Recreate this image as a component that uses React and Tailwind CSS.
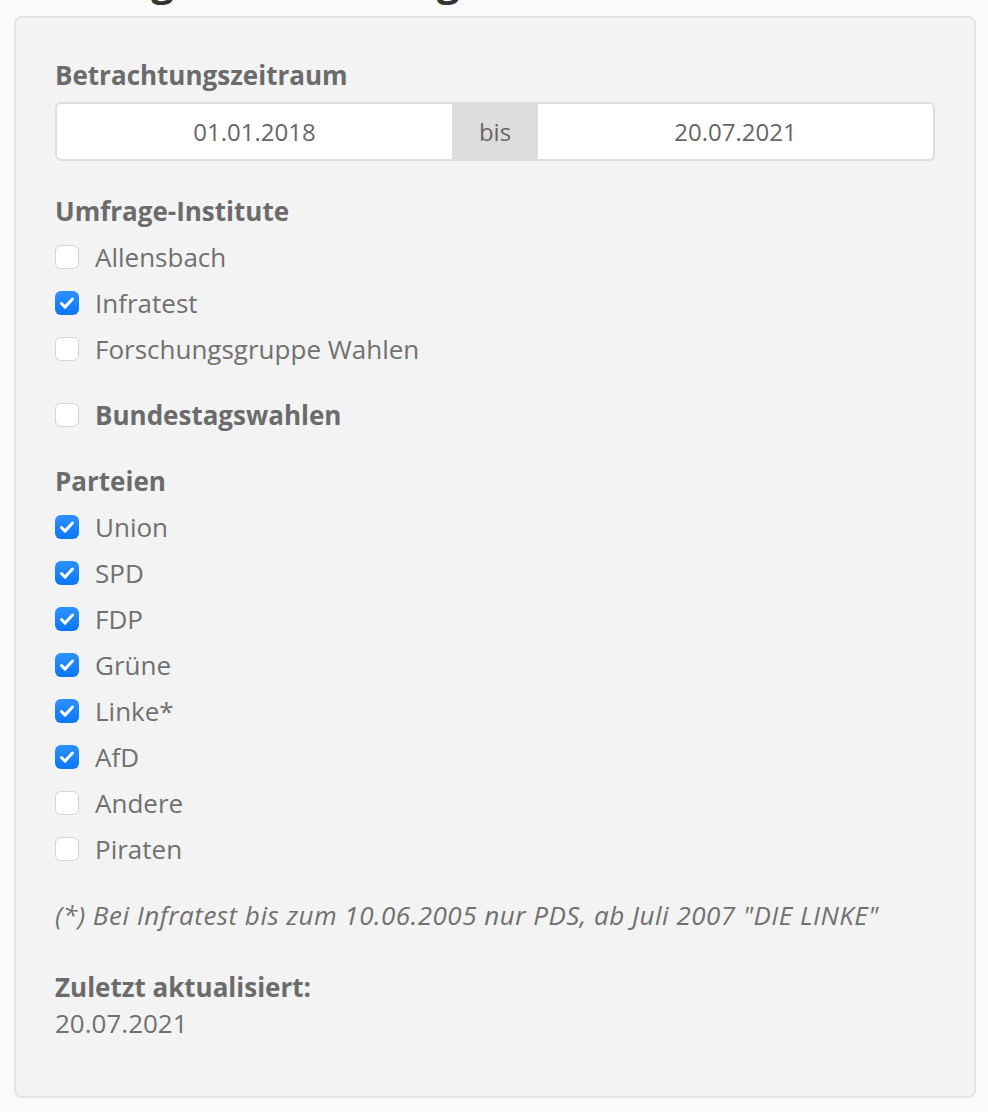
import React, { useState } from "react";

const institutes = [
  { id: "allensbach", label: "Allensbach", checked: false },
  { id: "infratest", label: "Infratest", checked: true },
  { id: "fgw", label: "Forschungsgruppe Wahlen", checked: false },
];

const parties = [
  { id: "union", label: "Union", checked: true },
  { id: "spd", label: "SPD", checked: true },
  { id: "fdp", label: "FDP", checked: true },
  { id: "gruene", label: "Grüne", checked: true },
  { id: "linke", label: "Linke*", checked: true },
  { id: "afd", label: "AfD", checked: true },
  { id: "andere", label: "Andere", checked: false },
  { id: "piraten", label: "Piraten", checked: false },
];

const Box = ({ checked }) =>
  checked ? (
    <span className="flex h-[24px] w-[24px] shrink-0 items-center justify-center rounded-[6px] bg-gradient-to-b from-[#2b93ff] to-[#0a76f5]">
      <svg width="18" height="18" viewBox="0 0 18 18" fill="none">
        <path d="M3.5 9.5l3.6 3.6L14.5 5" stroke="white" strokeWidth="3" strokeLinecap="round" strokeLinejoin="round" />
      </svg>
    </span>
  ) : (
    <span className="h-[24px] w-[24px] shrink-0 rounded-[6px] border border-[#d3d3d3] bg-white" />
  );

const CheckRow = ({ item, bold, onToggle }) => (
  <label className="flex h-[46px] cursor-pointer items-center gap-[16px]" onClick={() => onToggle(item.id)}>
    <Box checked={item.checked} />
    <span className={bold ? "font-bold text-[#6b6b6b]" : "text-[#707070]"}>{item.label}</span>
  </label>
);

const App = () => {
  const [inst, setInst] = useState(institutes);
  const [party, setParty] = useState(parties);
  const [btw, setBtw] = useState(false);

  const toggle = (list, setList) => (id) =>
    setList(list.map((x) => (x.id === id ? { ...x, checked: !x.checked } : x)));

  return (
    <div className="min-h-[1112px] bg-[#fafafa] pl-[14px] pr-[12px] font-['Open_Sans',sans-serif] text-[26px] leading-[36px]">
      {/* page heading, scrolled mostly out of view */}
      <div className="flex h-[16px] flex-col justify-end overflow-hidden">
        <h1 className="mb-[11px] shrink-0 pl-[10px] text-[40px] font-bold leading-[48px] text-[#333]">Umfragen im Zeitvergleich</h1>
      </div>

      <div className="rounded-[8px] border-2 border-[#e4e4e4] bg-[#f3f3f3] px-[39px] pb-[55px] pt-[39px]">
        <h3 className="font-bold text-[#6b6b6b]">Betrachtungszeitraum</h3>
        <div className="mt-[9px] flex h-[59px] overflow-hidden rounded-[6px] border-2 border-[#dedede] bg-white text-[24px] text-[#666]">
          <div className="flex flex-1 items-center justify-center">01.01.2018</div>
          <div className="flex w-[86px] items-center justify-center bg-[#dddddd]">bis</div>
          <div className="flex flex-1 items-center justify-center">20.07.2021</div>
        </div>

        <h3 className="mt-[32px] font-bold text-[#6b6b6b]">Umfrage-Institute</h3>
        <div className="mt-[5px]">
          {inst.map((i) => (
            <CheckRow key={i.id} item={i} onToggle={toggle(inst, setInst)} />
          ))}
        </div>

        <div className="mt-[20px]">
          <CheckRow item={{ id: "btw", label: "Bundestagswahlen", checked: btw }} bold onToggle={() => setBtw(!btw)} />
        </div>

        <h3 className="mt-[25px] font-bold text-[#6b6b6b]">Parteien</h3>
        <div className="mt-[5px]">
          {party.map((p) => (
            <CheckRow key={p.id} item={p} onToggle={toggle(party, setParty)} />
          ))}
        </div>

        <p className="mt-[25px] italic tracking-[0.5px] text-[#707070]">
          (*) Bei Infratest bis zum 10.06.2005 nur PDS, ab Juli 2007 "DIE LINKE"
        </p>

        <p className="mt-[36px] font-bold text-[#6b6b6b]">Zuletzt aktualisiert:</p>
        <p className="text-[#707070]">20.07.2021</p>
      </div>
    </div>
  );
};

export default App;
